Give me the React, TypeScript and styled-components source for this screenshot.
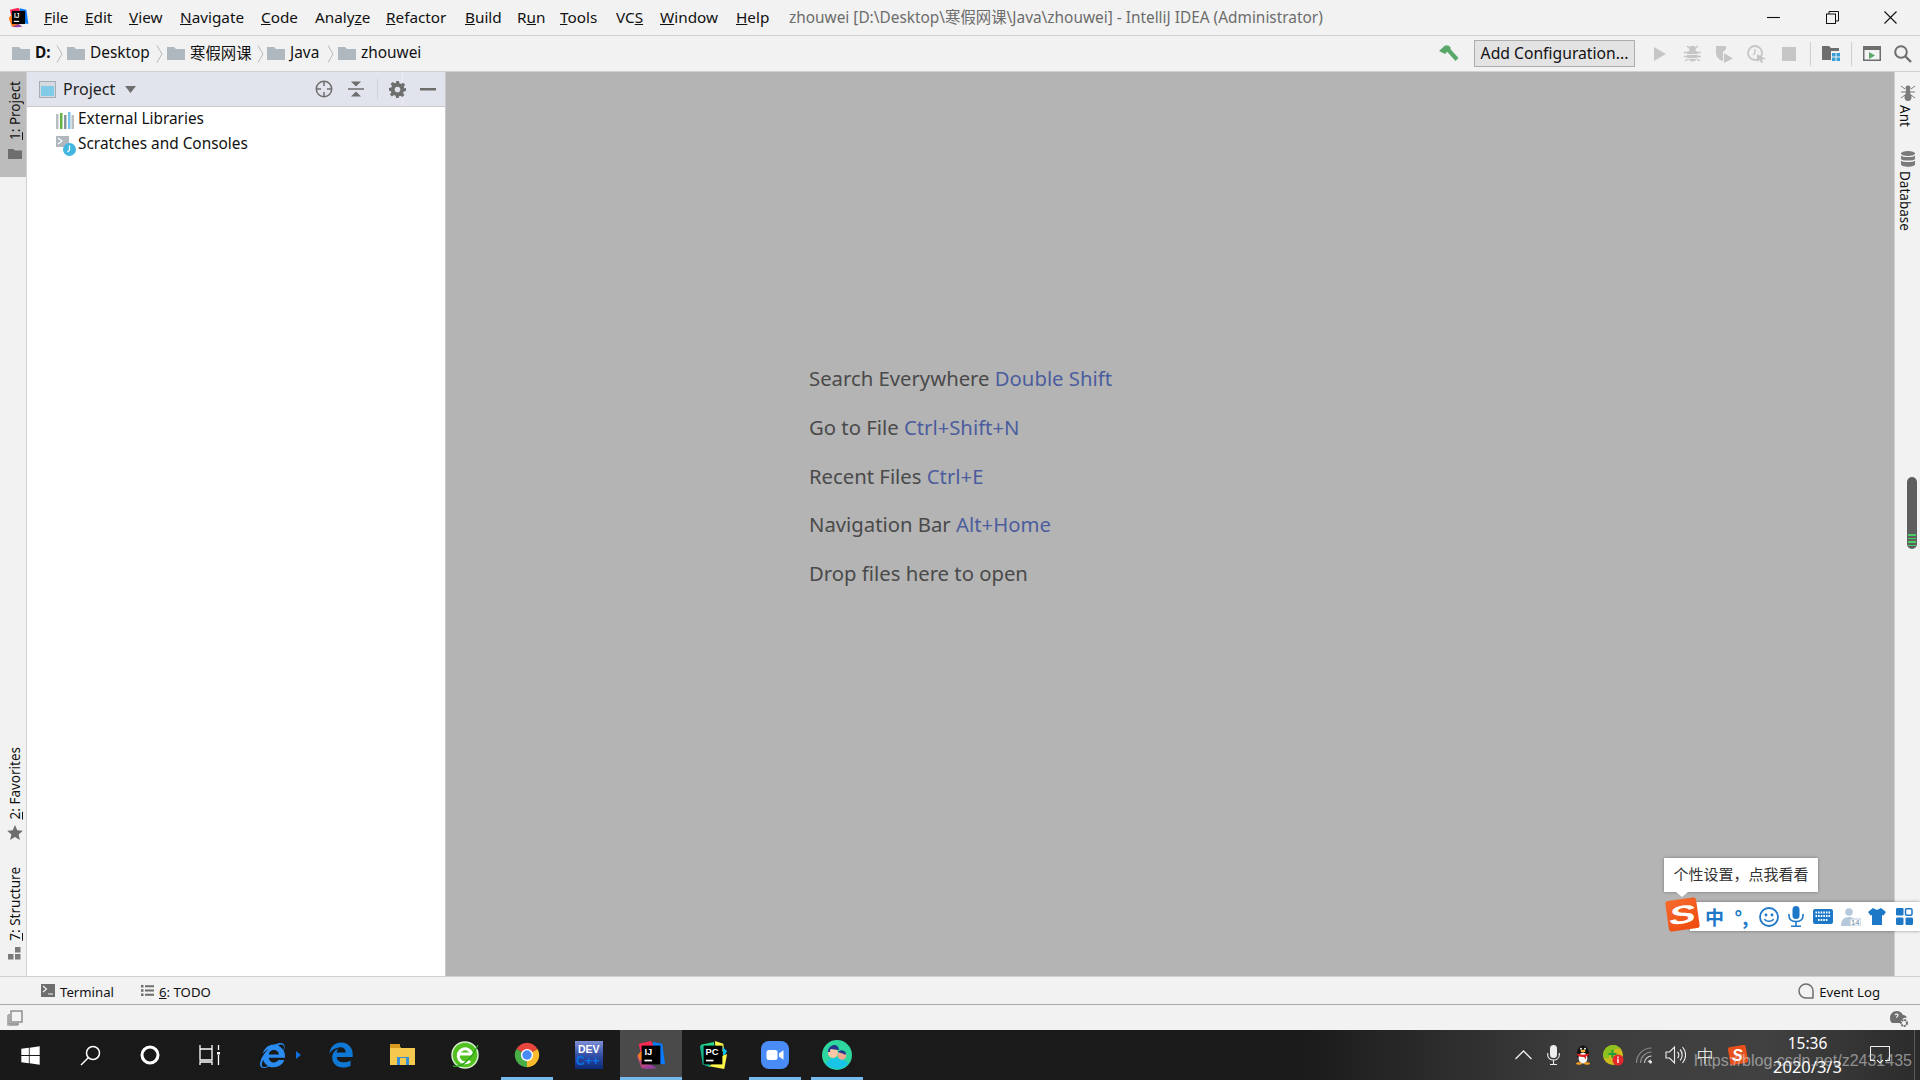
import React from "react";
import styled, { createGlobalStyle } from "styled-components";
import { FaWindows, FaInternetExplorer, FaEdgeLegacy } from "react-icons/fa";

const FONT = `"Noto Sans", "Noto Sans CJK SC", sans-serif`;

const Global = createGlobalStyle`
  html, body { margin: 0; padding: 0; width: 1920px; height: 1080px; overflow: hidden; }
  body { font-family: ${FONT}; color: #111; background: #f2f2f2; }
  svg { display: block; flex: none; }
`;

const Page = styled.div`
  position: relative; width: 1920px; height: 1080px; display: flex; flex-direction: column; overflow: hidden;
`;
const TitleBar = styled.header`
  height: 35px; display: flex; align-items: center; background: #f2f2f2;
  border-bottom: 1px solid #d0d0d0; padding-left: 8px;
`;
const LogoSlot = styled.div`width: 36px; display: flex;`;
const MenuItem = styled.span<{ $w: number }>`
  width: ${p => p.$w}px; flex: none; font-size: 15.3px; color: #111; white-space: nowrap; margin-bottom: 2px;
`;
const WindowTitle = styled.span`
  font-size: 15.4px; color: #6c6c6c; white-space: nowrap; flex: 1; margin-bottom: 2px;
`;
const WinButton = styled.div`width: 58.5px; height: 35px; display: flex; align-items: center; justify-content: center;`;
const WinButtons = styled.div`display: flex;`;

const NavBar = styled.nav`
  height: 35px; display: flex; align-items: center; background: #f2f2f2; border-bottom: 1px solid #d0d0d0; padding-left: 12px;
`;
const Crumb = styled.div<{ $w: number }>`
  width: ${p => p.$w}px; flex: none; display: flex; align-items: center; gap: 5px; padding-right: 4px; box-sizing: border-box;
`;
const CrumbText = styled.span<{ $bold?: boolean }>`
  font-size: 15.4px; font-weight: ${p => (p.$bold ? 700 : 400)}; color: #111; white-space: nowrap; margin-bottom: 2px; flex: 1;
`;
const NavTools = styled.div`margin-left: auto; display: flex; align-items: center; padding-right: 1px;`;
const Tool = styled.div<{ $w: number }>`
  width: ${p => p.$w}px; height: 30px; display: flex; align-items: center; justify-content: center; flex: none;
`;
const ConfigButton = styled.button`
  width: 161px; height: 27px; margin: 0 9px 0 12px; padding: 0 0 2px; background: #e3e3e3; border: 1px solid #adadad; outline: 0;
  font-family: ${FONT}; font-size: 15.7px; color: #111;
`;
const ToolSep = styled.div`width: 1px; height: 24px; background: #cfcfcf; flex: none; margin: 0 5px;`;

const Main = styled.main`flex: 1; min-height: 0; display: flex;`;
const LeftStripe = styled.aside`
  width: 26px; flex: none; display: flex; flex-direction: column; background: #f2f2f2; border-right: 1px solid #cfcfcf;
`;
const StripeButton = styled.div<{ $active?: boolean }>`
  display: flex; flex-direction: column; align-items: center; gap: 6px; padding-left: 3px;
  background: ${p => (p.$active ? "#bcbcbc" : "transparent")};
`;
const ProjectStripe = styled(StripeButton)`height: 105px; padding-top: 9px; box-sizing: border-box; gap: 8px;`;
const StripeBottom = styled.div`margin-top: auto; display: flex; flex-direction: column; gap: 27px; padding-bottom: 16px;`;
const UpLabel = styled.span`
  writing-mode: vertical-rl; transform: rotate(180deg); font-size: 13.5px; line-height: 18px; color: #111; white-space: nowrap;
`;
const DownLabel = styled.span`
  writing-mode: vertical-rl; font-size: 13.5px; line-height: 18px; color: #111; white-space: nowrap; margin-right: 5px;
`;
const ProjectPanel = styled.section`
  width: 418px; flex: none; background: #fff; border-right: 1px solid #c9c9c9; display: flex; flex-direction: column;
`;
const PanelHeader = styled.div`
  position: relative; height: 34px; flex: none; display: flex; align-items: center; background: #e1e4ec; border-bottom: 1px solid #c9c9c9; padding-left: 12px;
  &::after { content: ""; position: absolute; left: 375px; top: 0; bottom: 0; width: 1px; background: #edeff4; }
`;
const PanelTitle = styled.span`font-size: 16px; color: #222; margin: 0 0 0 7px; width: 62px;`;
const PanelTools = styled.div`margin-left: auto; display: flex; align-items: center; position: relative; z-index: 1;`;
const PanelTool = styled.div<{ $w: number }>`
  width: ${p => p.$w}px; height: 24px; display: flex; align-items: center; justify-content: center;
`;
const PanelSep = styled.div`width: 1px; height: 20px; background: #cdd0d8; margin: 0 5px;`;
const Tree = styled.div`padding-top: 1px; display: flex; flex-direction: column;`;
const TreeRow = styled.div`
  height: 25px; display: grid; grid-template-columns: 18px auto; justify-content: start; align-items: center; column-gap: 4px; padding-left: 29px;
`;
const TreeLabel = styled.span`font-size: 15.4px; color: #111; margin-bottom: 5px;`;
const Editor = styled.section`
  flex: 1; min-width: 0; background: #b4b4b4; padding: 282px 0 0 363px; box-sizing: border-box;
`;
const Hint = styled.div`font-size: 20.3px; line-height: 49px; height: 48.8px; color: #4a4a4a; white-space: nowrap;`;
const Shortcut = styled.span`color: #4c5d9e;`;
const RightStripe = styled.aside`
  width: 25px; flex: none; display: flex; flex-direction: column; align-items: center; background: #f2f2f2;
  border-left: 1px solid #cfcfcf; padding-top: 13px; gap: 4px;
`;
const RightGroup = styled.div<{ $gap: number }>`
  display: flex; flex-direction: column; align-items: center; gap: 4px; margin-bottom: ${p => p.$gap}px;
`;

const ToolBar = styled.div`
  height: 24px; padding-top: 3px; flex: none; display: flex; align-items: center; background: #f2f2f2; border-top: 1px solid #d0d0d0;
  padding-left: 41px; font-size: 13.2px; color: #111;
`;
const ToolTab = styled.div<{ $w?: number }>`
  display: flex; align-items: center; gap: 5px; width: ${p => (p.$w ? p.$w + "px" : "auto")};
`;
const ToolRight = styled(ToolTab)`margin-left: auto; padding-right: 40px;`;
const TabIcon = styled.span`margin-top: -3px;`;
const StatusBar = styled.div`
  height: 25px; flex: none; display: flex; align-items: center; justify-content: space-between; background: #f2f2f2;
  border-top: 1px solid #a8a8a8; padding: 0 11px 0 7px;
`;
const Taskbar = styled.footer`
  position: relative; height: 50px; flex: none; display: flex; align-items: center;
  background: linear-gradient(90deg, #191919 0, #1b1b1b 68%, #3d3d3d 82%, #414141 92%, #2b2b2b 100%);
`;
const TaskSlot = styled.div<{ $w: number; $active?: boolean; $open?: boolean }>`
  position: relative; width: ${p => p.$w}px; height: 50px; flex: none; display: flex; align-items: center; justify-content: center;
  background: ${p => (p.$active ? "#4a4a4a" : "transparent")};
  &::after {
    content: ""; position: absolute; bottom: 0; height: 3px; background: #76b9ed;
    left: ${p => (p.$active ? "0" : "5px")}; right: ${p => (p.$active ? "0" : "5px")};
    display: ${p => (p.$open ? "block" : "none")};
  }
`;
const IESlot = styled(TaskSlot)`gap: 11px; padding-left: 20px; box-sizing: border-box; justify-content: flex-start;`;
const Caret = styled.span`
  width: 0; height: 0; border-left: 5px solid #0f6fe0; border-top: 4px solid transparent; border-bottom: 4px solid transparent;
`;
const Tray = styled.div`margin-left: auto; display: flex; align-items: center; height: 50px;`;
const TrayItem = styled.div<{ $w: number }>`
  width: ${p => p.$w}px; flex: none; display: flex; align-items: center; justify-content: center;
`;
const TrayIme = styled.span`font-family: "Noto Sans CJK SC", sans-serif; font-weight: 200; color: #fff; font-size: 17px; line-height: 1; margin-bottom: 2px;`;
const Clock = styled.div`
  width: 105px; height: 50px; flex: none; display: flex; flex-direction: column; align-items: center; color: #fff; padding-top: 3px; box-sizing: border-box;
`;
const ClockLine = styled.span`font-size: 15.5px; line-height: 21px; white-space: nowrap;`;
const ClockDate = styled(ClockLine)`font-size: 16.5px; line-height: 25px;`;
const DesktopEdge = styled.div`width: 1px; height: 50px; background: #5a5a5a; margin: 0 5px 0 14px;`;
const Watermark = styled.span`
  position: absolute; left: 1694px; top: 20px; font-family: "Liberation Sans", sans-serif; font-size: 16px; line-height: 22px;
  color: rgba(225, 225, 225, 0.55); white-space: nowrap;
`;
const ScrollPill = styled.div`
  position: absolute; left: 1907px; top: 477px; width: 10px; height: 72px; border-radius: 5px; background: #5e5e5e;
  display: flex; flex-direction: column; justify-content: flex-end; align-items: center; gap: 2px; padding-bottom: 3px; box-sizing: border-box;
  box-shadow: 0 0 2px rgba(255,255,255,.8);
`;
const ScrollTick = styled.i`display: block; width: 8px; height: 1.5px; background: #4bd162;`;
const ImeTip = styled.div`
  position: absolute; left: 1664px; top: 858px; width: 154px; height: 34px; padding-bottom: 3px; box-sizing: border-box; background: #fff; display: flex; align-items: center; justify-content: center;
  font-family: "Noto Sans CJK SC", sans-serif; font-size: 15px; color: #333; box-shadow: 0 0 3px rgba(0,0,0,.35);
  white-space: nowrap;
  &::after {
    content: ""; position: absolute; left: 12px; bottom: -5px; border-top: 5px solid #fff; border-left: 6px solid transparent; border-right: 6px solid transparent;
  }
`;
const ImeBar = styled.div`
  position: absolute; left: 1690px; top: 902px; width: 230px; height: 29px; background: #fff; display: flex; align-items: center; padding-left: 11px; box-sizing: border-box;
  box-shadow: 0 0 3px rgba(0,0,0,.4);
`;
const ImeSlot = styled.div<{ $w: number }>`
  width: ${p => p.$w}px; flex: none; display: flex; align-items: center; justify-content: center; color: #1e78c8;
`;
const ImeGlyph = styled.span`font-family: "Noto Sans CJK SC", sans-serif; font-weight: 700; font-size: 19px; line-height: 1; color: #1e78c8;`;
const ImeLogo = styled.div`
  position: absolute; left: 1667px; top: 899px; width: 31px; height: 31px; border-radius: 3px; transform: rotate(-8deg);
  background: linear-gradient(160deg, #f76a2c, #ee4a10); display: flex; align-items: center; justify-content: center;
  font-family: "Liberation Sans", sans-serif; font-weight: 700; font-style: italic; font-size: 30px; line-height: 1; color: #fff;
`;
const ImeLetter = styled.span`display: block; transform: scale(1.35, 0.85);`;

const Svg: React.FC<{ w: number; h: number; vb?: string; children: React.ReactNode }> = ({ w, h, vb, children }) => (
  <svg width={w} height={h} viewBox={vb || `0 0 ${w} ${h}`}>{children}</svg>
);

const Folder = ({ c = "#afb8bf", w = 18, h = 13 }: { c?: string; w?: number; h?: number }) => (
  <Svg w={w} h={h} vb="0 0 18 13"><path d="M0 0h7l2 2h9v11H0z" fill={c} /></Svg>
);
const Chevron = () => (
  <Svg w={7} h={18}><path d="M1 0.5l5 8.500-5 8.500" fill="none" stroke="#b8b8b8" strokeWidth="1" /></Svg>
);
const IJLogo = ({ s = 22, dark = false }: { s?: number; dark?: boolean }) => (
  <Svg w={s} h={s} vb="0 0 32 32">
    <path d="M3 4l13-3 4 7-14 12z" fill="#fe2857" />
    <path d="M1 17l7-8 8 20-10 1z" fill={dark ? "#b5497f" : "#fc801d"} />
    <path d="M2 16l5-6 3 8-6 4z" fill="#fc801d" />
    <path d="M18 2l10 2 3 22-12-2z" fill="#087cfa" />
    <path d="M6 30l10-4 6 4-10 1z" fill="#9b3fa1" />
    <rect x="6" y="6" width="20" height="20" fill="#000" />
    <text x="9" y="16" fontFamily="Liberation Sans" fontSize="10" fontWeight="700" fill="#fff">IJ</text>
    <rect x="9" y="21" width="8" height="1.8" fill="#fff" />
  </Svg>
);
const PCLogo = () => (
  <Svg w={30} h={32} vb="0 0 32 32">
    <path d="M3 5l14-3 1 8-13 12z" fill="#21d789" />
    <path d="M2 6l3 20 8 3-3-22z" fill="#14b58e" />
    <path d="M18 1l9 3 1 8-9 1z" fill="#fcf84a" />
    <path d="M26 7l5 5-4 6z" fill="#07c3f2" />
    <path d="M12 28l16 3 3-16-10 4z" fill="#fcf84a" />
    <rect x="6" y="6" width="20" height="20" fill="#000" />
    <text x="8" y="16" fontFamily="Liberation Sans" fontSize="10" fontWeight="700" fill="#fff">PC</text>
    <rect x="8.500" y="21" width="8" height="1.8" fill="#fff" />
  </Svg>
);
const Chrome = () => (
  <Svg w={28} h={28} vb="0 0 32 32">
    <path d="M3.900 9A14 14 0 0 1 28.100 9L16 16z" fill="#e8453c" />
    <path d="M28.100 9A14 14 0 0 1 16 30L16 16z" fill="#f9bb2d" />
    <path d="M16 30A14 14 0 0 1 3.900 9L16 16z" fill="#4aae48" />
    <circle cx="16" cy="16" r="7" fill="#fff" />
    <circle cx="16" cy="16" r="5.400" fill="#4a8af4" />
  </Svg>
);
const DevCpp = () => (
  <Svg w={28} h={28}>
    <defs><linearGradient id="dv" x1="0" y1="0" x2="0" y2="1"><stop offset="0" stopColor="#7f8fd6" /><stop offset=".5" stopColor="#3550a8" /><stop offset="1" stopColor="#0b2a78" /></linearGradient></defs>
    <rect width="28" height="28" fill="url(#dv)" />
    <text x="3" y="12" fontFamily="Liberation Sans" fontSize="10.500" fontWeight="700" fill="#fff">DEV</text>
    <text x="1" y="24" fontFamily="Liberation Sans" fontSize="12.500" fontWeight="700" fill="#0a72e6">C++</text>
  </Svg>
);
const GreenE = () => (
  <Svg w={30} h={30}>
    <circle cx="15" cy="15" r="13" fill="#52c11f" stroke="#d7eed0" strokeWidth="1.500" />
    <path d="M7 14h15M22 14a7 7 0 1 0-2 7" fill="none" stroke="#fff" strokeWidth="3" />
    <path d="M3 26c8 2 18-6 25-21" fill="none" stroke="#2aa01f" strokeWidth="1.300" />
  </Svg>
);
const ExplorerIcon = () => (
  <Svg w={28} h={24}>
    <path d="M1 5c0-2 1-3 2-3h7l2 3h14v17H1z" fill="#f4c94e" />
    <rect x="1" y="1" width="10" height="4" fill="#d79b1d" />
    <path d="M8 22v-8h12v8h-3v-4h-6v4z" fill="#3a8fd9" />
    <rect x="11" y="15" width="6" height="4" fill="#f4c94e" />
  </Svg>
);
const ZoomLogo = () => (
  <Svg w={28} h={28}>
    <rect width="28" height="28" rx="8" fill="#4a8cf6" />
    <rect x="5.500" y="9" width="11" height="10" rx="2.500" fill="#fff" />
    <path d="M18 12.500l4.500-3.200v9.400L18 15.500z" fill="#fff" />
  </Svg>
);
const FaceLogo = () => (
  <Svg w={30} h={30}>
    <circle cx="15" cy="15" r="15" fill="#2ed6a0" />
    <path d="M4 24c2-5 6-6 10-6s10 1 12 6a15 15 0 0 1-22 0z" fill="#18c5e6" />
    <circle cx="11" cy="13" r="5" fill="#f9c6a8" />
    <circle cx="20" cy="15.500" r="4.200" fill="#f4a990" />
    <path d="M6 12c0-5 4-7 6.500-7s4.500 2 4.500 5c-4 0-6-1-8-1-1 0-1 2-1 3z" fill="#25368a" />
    <path d="M16 12c1-2 6-3 8 1l-1 2c-2-2-5-2-7-3z" fill="#25368a" />
  </Svg>
);
const WinIcon = () => <FaWindows size={21} color="#fff" />;
const SearchGlyph = ({ c = "#fff", s = 21 }: { c?: string; s?: number }) => (
  <Svg w={s} h={s} vb="0 0 21 21">
    <circle cx="13" cy="8" r="6.500" fill="none" stroke={c} strokeWidth="1.500" />
    <path d="M8.500 12.500L1 20" stroke={c} strokeWidth="1.500" />
  </Svg>
);
const Cortana = () => <Svg w={20} h={20}><circle cx="10" cy="10" r="8" fill="none" stroke="#fff" strokeWidth="3" /></Svg>;
const TaskView = () => (
  <Svg w={22} h={20}>
    <path d="M1 0v4h12V0M1 4v11h12V4M1 20v-3h12v3" fill="none" stroke="#fff" strokeWidth="1.300" />
    <path d="M19.500 0v5M19.500 10v10" stroke="#fff" strokeWidth="1.300" />
    <rect x="18" y="7" width="3" height="2.500" fill="#fff" />
  </Svg>
);

const Hammer = () => (
  <Svg w={20} h={18}>
    <path d="M0 6L6 .5h3.500L12 3 6 9z" fill="#59a869" />
    <path d="M7 5.500l3-3 9.500 10.500-3 3z" fill="#59a869" />
  </Svg>
);
const Play = ({ c = "#c6c6c6" }: { c?: string }) => <Svg w={14} h={16}><path d="M1 1l12 7-12 7z" fill={c} /></Svg>;
const Bug = () => (
  <Svg w={17} h={17}>
    <ellipse cx="8.500" cy="10.500" rx="5.500" ry="6" fill="#c6c6c6" />
    <ellipse cx="8.500" cy="3.500" rx="3.500" ry="2.800" fill="#c6c6c6" />
    <path d="M0 7.500h17M0 11.500h17M1 16l3-2M16 16l-3-2M3 1l2.500 2M14 1l-2.500 2" stroke="#c6c6c6" strokeWidth="1.400" />
    <path d="M3 9.500h11M3 13.500h11" stroke="#f2f2f2" strokeWidth="0.900" />
  </Svg>
);
const Coverage = () => (
  <Svg w={19} h={18}>
    <path d="M1 1h10v3L8 7v9l-3-1c-3-2-4-5-4-8z" fill="#c6c6c6" />
    <path d="M9 8l9 5.500-9 4.500z" fill="#c6c6c6" />
  </Svg>
);
const Profiler = () => (
  <Svg w={20} h={18}>
    <circle cx="8" cy="8" r="7" fill="none" stroke="#c6c6c6" strokeWidth="1.800" />
    <path d="M8 4v4l-2 2" fill="none" stroke="#c6c6c6" strokeWidth="1.400" />
    <path d="M10 9l9 5-4 .5 1 3-2 .5-1.500-3-2.500 2z" fill="#c6c6c6" />
  </Svg>
);
const Stop = () => <Svg w={14} h={14}><rect width="14" height="14" fill="#c6c6c6" /></Svg>;
const ProjectStructure = () => (
  <Svg w={19} h={17}>
    <path d="M0 1h7l2 2h8v3H9v9H0z" fill="#6e6e6e" />
    <path d="M10 8h3.500v3.500H10zM14.500 8H18v3.500h-3.500zM10 12.500h3.500V16H10zM14.500 12.500H18V16h-3.500z" fill="#389fd6" />
  </Svg>
);
const RunPanel = () => (
  <Svg w={18} h={15}>
    <rect x=".75" y=".75" width="16.500" height="13.500" fill="none" stroke="#6e6e6e" strokeWidth="1.500" />
    <rect x="1" y="1" width="16" height="3" fill="#6e6e6e" />
    <path d="M6 6l6 3.500-6 3.500z" fill="#59a869" />
  </Svg>
);
const SearchDark = () => (
  <Svg w={18} h={18}>
    <circle cx="7" cy="7" r="5.800" fill="none" stroke="#6e6e6e" strokeWidth="2" />
    <path d="M11 11l6 6" stroke="#6e6e6e" strokeWidth="2.400" />
  </Svg>
);
const Minimize = () => <Svg w={13} h={13}><path d="M0 6.500h13" stroke="#111" strokeWidth="1.100" /></Svg>;
const Restore = () => (
  <Svg w={13} h={13}>
    <rect x=".5" y="3" width="9" height="9.500" fill="none" stroke="#111" />
    <path d="M3 3V.5h9.500V10H9.500" fill="none" stroke="#111" />
  </Svg>
);
const CloseX = () => <Svg w={13} h={13}><path d="M.5.500l12 12M12.500.500l-12 12" stroke="#111" strokeWidth="1.100" /></Svg>;

const ProjectIcon = () => (
  <Svg w={17} h={17}>
    <rect width="17" height="17" fill="#a4adb4" />
    <rect x="1" y="1" width="15" height="15" fill="#d5dae0" />
    <rect x="2" y="5" width="13" height="10" fill="#7fcbe8" />
  </Svg>
);
const Caret2 = () => <Svg w={11} h={7}><path d="M0 0h11L5.500 7z" fill="#6e6e6e" /></Svg>;
const Locate = () => (
  <Svg w={18} h={18}>
    <circle cx="9" cy="9" r="7.700" fill="none" stroke="#6e6e6e" strokeWidth="1.500" />
    <path d="M9 1v5M9 12v5M1 9h5M12 9h5" stroke="#6e6e6e" strokeWidth="1.500" />
  </Svg>
);
const Collapse = () => (
  <Svg w={16} h={16}>
    <path d="M0 8h16" stroke="#6e6e6e" strokeWidth="1.500" />
    <path d="M3 .5h10L8 5.500zM3 15.500h10L8 10.500z" fill="#6e6e6e" />
  </Svg>
);
const Gear = () => (
  <Svg w={17} h={17} vb="0 0 24 24">
    <path d="M10 0h4l.7 3.300 2.300 1 2.900-1.900 2.800 2.800-1.900 2.900 1 2.300L24 10v4l-3.200.7-1 2.300 1.900 2.900-2.800 2.800-2.900-1.900-2.300 1L14 24h-4l-.7-3.100-2.300-1-2.900 1.900-2.800-2.800 1.900-2.900-1-2.300L0 14v-4l3.200-.7 1-2.300-1.900-2.900 2.800-2.800 2.900 1.900 2.300-1z M12 8a4 4 0 1 0 0 8 4 4 0 0 0 0-8z" fill="#6e6e6e" fillRule="evenodd" />
  </Svg>
);
const Minus = () => <Svg w={16} h={3}><rect width="16" height="2.500" fill="#6e6e6e" /></Svg>;
const Libraries = () => (
  <Svg w={18} h={18}>
    <rect x="0" y="2" width="2.500" height="15" fill="#b8bec4" />
    <rect x="4" y="1" width="2.500" height="16" fill="#62b543" />
    <rect x="8" y="3" width="2.500" height="14" fill="#8a949c" />
    <rect x="12" y="0" width="2.500" height="17" fill="#40a8e0" opacity=".7" />
    <rect x="15.500" y="3" width="2.500" height="14" fill="#b8bec4" />
  </Svg>
);
const Scratches = () => (
  <Svg w={20} h={20}>
    <rect x="0" y="0" width="13" height="11" fill="#b0b8be" />
    <path d="M2 2l4 3-4 3" fill="none" stroke="#fff" strokeWidth="1.200" />
    <circle cx="13.500" cy="13.500" r="6.500" fill="#40b6e0" />
    <path d="M13.500 9.500v4.500l-2 2" fill="none" stroke="#fff" strokeWidth="1.200" />
  </Svg>
);
const Star = () => (
  <Svg w={16} h={15} vb="0 0 24 23"><path d="M12 0l3.500 8 8.500.8-6.400 5.700L19.500 23 12 18.500 4.500 23l1.900-8.500L0 8.800 8.500 8z" fill="#6e6e6e" /></Svg>
);
const Structure = () => (
  <Svg w={13} h={13}><path d="M7 0h5.500v5.500H7zM0 7h5.500v5.500H0zM7 7h5.500v5.500H7z" fill="#7b7b7b" /></Svg>
);
const AntIcon = () => (
  <Svg w={14} h={16}>
    <circle cx="7" cy="3" r="2.500" fill="#7b7b7b" />
    <ellipse cx="7" cy="7" rx="2.500" ry="2.500" fill="#7b7b7b" />
    <ellipse cx="7" cy="12" rx="3.500" ry="4" fill="#7b7b7b" />
    <path d="M0 1l4 3M14 1l-4 3M0 7h14M0 13l4-3M14 13l-4-3" stroke="#7b7b7b" strokeWidth="1" />
  </Svg>
);
const Database = () => (
  <Svg w={14} h={16}>
    <ellipse cx="7" cy="2.500" rx="7" ry="2.500" fill="#7b7b7b" />
    <path d="M0 4.500c1 2 13 2 14 0V8c-1 2-13 2-14 0z" fill="#7b7b7b" />
    <path d="M0 9.500c1 2 13 2 14 0V13.500c-1 3-13 3-14 0z" fill="#7b7b7b" />
  </Svg>
);
const TerminalIcon = () => (
  <Svg w={14} h={13}>
    <rect width="14" height="13" fill="#6e6e6e" />
    <path d="M2 2l3.500 3L2 8M7 10h5" fill="none" stroke="#f2f2f2" strokeWidth="1.200" />
  </Svg>
);
const TodoIcon = () => (
  <Svg w={13} h={11}>
    <path d="M0 0h2.500v2.500H0zM0 4.250h2.500v2.500H0zM0 8.500h2.500V11H0zM4 .25h9v2H4zM4 4.500h9v2H4zM4 8.750h9v2H4z" fill="#6e6e6e" />
  </Svg>
);
const Bubble = () => (
  <Svg w={16} h={16}>
    <path d="M8 1a7 7 0 0 1 7 7v7H8A7 7 0 1 1 8 1z" fill="none" stroke="#6e6e6e" strokeWidth="1.500" strokeLinejoin="round" />
  </Svg>
);
const Layers = () => (
  <Svg w={16} h={16}>
    <rect x="4" y="1" width="11" height="11" fill="none" stroke="#808080" strokeWidth="1.300" />
    <path d="M2 4v10h10" fill="none" stroke="#808080" strokeWidth="1.300" />
    <path d="M.5 5v10.500H11" fill="none" stroke="#b0b0b0" strokeWidth="1" />
  </Svg>
);
const HelpGear = () => (
  <Svg w={20} h={18}>
    <path d="M1 9c0-4 3-7 6.500-7S13 4 14 6c2 0 3.500 1 4 3-3-1-7 2-6 5H4c-2 0-3-2-3-5z" fill="#6e6e6e" />
    <path d="M6 6c1-1.500 3-1 3 .300 0 1-1.500 1.200-1.500 2.500" fill="none" stroke="#f2f2f2" strokeWidth="1.200" />
    <circle cx="15" cy="14" r="3" fill="none" stroke="#6e6e6e" strokeWidth="2" strokeDasharray="2 .8" />
  </Svg>
);

const TrayChevron = () => <Svg w={17} h={10}><path d="M.5 9l8-8 8 8" fill="none" stroke="#eee" strokeWidth="1.300" /></Svg>;
const TrayMic = () => (
  <Svg w={13} h={20}>
    <rect x="3" y="0" width="7" height="13" rx="3.500" fill="#eee" />
    <path d="M.7 8v2c0 3 2.500 5 5.800 5s5.800-2 5.800-5V8M6.500 15v4M3 19.500h7" fill="none" stroke="#eee" strokeWidth="1.100" />
  </Svg>
);
const Penguin = () => (
  <Svg w={16} h={20}>
    <ellipse cx="8" cy="9" rx="6" ry="8.500" fill="#111" />
    <ellipse cx="8" cy="13" rx="4.500" ry="5.500" fill="#f6f6f6" />
    <ellipse cx="8" cy="6" rx="2.500" ry="1.300" fill="#f5b32a" />
    <circle cx="6" cy="3.800" r="1" fill="#eee" /><circle cx="10" cy="3.800" r="1" fill="#eee" />
    <path d="M2.500 8.500c3 1.500 8 1.500 11 0l.5 1.500-3 1.500v3l-2-2.500c-3 0-6-.5-7-2z" fill="#e02020" />
    <ellipse cx="4" cy="18.500" rx="3" ry="1.300" fill="#f5a020" /><ellipse cx="12" cy="18.500" rx="3" ry="1.300" fill="#f5a020" />
  </Svg>
);
const GreenBadge = () => (
  <Svg w={21} h={21}>
    <circle cx="10" cy="10" r="10" fill="#cdbb1f" />
    <path d="M0 10a10 10 0 0 1 10-10c4 0 6 2 8 4-6-2-10 2-12 8-2 4-6 0-6-2z" fill="#8cc21f" />
    <path d="M9.500 5v8M5.500 9h8" stroke="#1f9e3a" strokeWidth="2" />
    <circle cx="15" cy="15" r="5.500" fill="#e5262a" />
    <rect x="14.300" y="13.500" width="1.400" height="4.500" fill="#fff" /><rect x="14.300" y="11.500" width="1.400" height="1.300" fill="#fff" />
  </Svg>
);
const Wifi = () => (
  <Svg w={17} h={17}>
    <path d="M.5 16a15 15 0 0 1 15-15M4.500 16a11 11 0 0 1 11-11" fill="none" stroke="#8a8a8a" strokeWidth="1.200" />
    <path d="M8.500 16a7 7 0 0 1 7-7M12 15a3.500 3.500 0 0 1 3-2" fill="none" stroke="#cfcfcf" strokeWidth="1.200" />
    <circle cx="14.500" cy="15" r="1.500" fill="#eee" />
  </Svg>
);
const Speaker = () => (
  <Svg w={21} h={20}>
    <path d="M1 7h3.500L9.500 2v16l-5-5H1z" fill="none" stroke="#eee" strokeWidth="1.100" />
    <path d="M12.500 7a4 4 0 0 1 0 6M15 4.500a8 8 0 0 1 0 11M17.500 2a12 12 0 0 1 0 16" fill="none" stroke="#eee" strokeWidth="1.100" />
  </Svg>
);
const SogouTray = () => (
  <Svg w={20} h={20}>
    <rect x="1" y="1" width="18" height="18" rx="2" fill="#e8501c" transform="rotate(-10 10 10)" />
    <text x="4" y="16" fontFamily="Liberation Sans" fontSize="16" fontWeight="700" fontStyle="italic" fill="#fff">S</text>
  </Svg>
);
const Notify = () => (
  <Svg w={20} h={19}>
    <path d="M.5.500h19v14H15M.5.500v14H5" fill="none" stroke="#eee" strokeWidth="1.100" />
    <path d="M7 14l3 3 3-3" fill="none" stroke="#eee" strokeWidth="1.100" />
  </Svg>
);

const ImeSmile = () => (
  <Svg w={20} h={20}>
    <circle cx="10" cy="10" r="9" fill="none" stroke="#1e78c8" strokeWidth="1.800" />
    <circle cx="7" cy="8" r="1.400" fill="#1e78c8" /><circle cx="13" cy="8" r="1.400" fill="#1e78c8" />
    <path d="M5.500 12c1.500 3 7.500 3 9 0" fill="none" stroke="#1e78c8" strokeWidth="1.500" />
  </Svg>
);
const ImeMic = () => (
  <Svg w={16} h={21}>
    <rect x="4.500" y="0" width="7" height="13" rx="3.500" fill="#1e78c8" />
    <path d="M1 8v2c0 3.500 3 5.500 7 5.500s7-2 7-5.500V8M8 15.500V20M3 20.200h10" fill="none" stroke="#1e78c8" strokeWidth="1.600" />
  </Svg>
);
const ImeKeys = () => (
  <Svg w={20} h={15}>
    <rect width="20" height="15" rx="2" fill="#1e78c8" />
    <path d="M2.500 3.500h15M2.500 7h15M5 11h10" stroke="#fff" strokeWidth="1.800" strokeDasharray="1.600 1" />
  </Svg>
);
const ImePerson = () => (
  <Svg w={20} h={18}>
    <circle cx="8" cy="4" r="3.800" fill="#b5c8dc" />
    <path d="M0 18c0-6 3-9 8-9 3 0 4 1 5 2v7z" fill="#b5c8dc" />
    <rect x="9" y="11" width="11" height="7" fill="#fff" stroke="#b5c8dc" />
    <text x="10" y="17.300" fontFamily="Liberation Sans" fontSize="7.500" fontWeight="700" fill="#8fa7bf">14</text>
  </Svg>
);
const ImeShirt = () => (
  <Svg w={18} h={17}><path d="M5 0l4 2 4-2 5 4-2.500 3.500L14 7v10H4V7L2.500 7.500 0 4z" fill="#1e78c8" /></Svg>
);
const ImeGrid = () => (
  <Svg w={17} h={17}>
    <rect width="7.500" height="7.500" rx="1.200" fill="#1e78c8" />
    <rect x="9.500" y=".8" width="6.500" height="6.500" rx="1.200" fill="#fff" stroke="#1e78c8" strokeWidth="1.500" />
    <rect y="9.500" width="7.500" height="7.500" rx="1.200" fill="#1e78c8" />
    <rect x="9.500" y="9.500" width="7.500" height="7.500" rx="1.200" fill="#1e78c8" />
  </Svg>
);

const menus: { pre: string; u: string; post: string; w: number }[] = [
  { pre: "", u: "F", post: "ile", w: 41 },
  { pre: "", u: "E", post: "dit", w: 44 },
  { pre: "", u: "V", post: "iew", w: 51 },
  { pre: "", u: "N", post: "avigate", w: 81 },
  { pre: "", u: "C", post: "ode", w: 54 },
  { pre: "Analy", u: "z", post: "e", w: 71 },
  { pre: "", u: "R", post: "efactor", w: 79 },
  { pre: "", u: "B", post: "uild", w: 52 },
  { pre: "R", u: "u", post: "n", w: 43 },
  { pre: "", u: "T", post: "ools", w: 56 },
  { pre: "VC", u: "S", post: "", w: 44 },
  { pre: "", u: "W", post: "indow", w: 76 },
  { pre: "", u: "H", post: "elp", w: 53 },
];

const crumbs = [
  { t: "D:", w: 55, bold: true },
  { t: "Desktop", w: 100 },
  { t: "寒假网课", w: 100 },
  { t: "Java", w: 71 },
  { t: "zhouwei", w: 90 },
];

const hints = [
  { t: "Search Everywhere ", k: "Double Shift" },
  { t: "Go to File ", k: "Ctrl+Shift+N" },
  { t: "Recent Files ", k: "Ctrl+E" },
  { t: "Navigation Bar ", k: "Alt+Home" },
  { t: "Drop files here to open", k: "" },
];

export default function App() {
  return (
    <Page>
      <Global />
      <TitleBar>
        <LogoSlot><IJLogo s={21} /></LogoSlot>
        {menus.map(m => (
          <MenuItem key={m.pre + m.u + m.post} $w={m.w}>{m.pre}<u>{m.u}</u>{m.post}</MenuItem>
        ))}
        <WindowTitle>zhouwei [D:\Desktop\寒假网课\Java\zhouwei] - IntelliJ IDEA (Administrator)</WindowTitle>
        <WinButtons>
          <WinButton><Minimize /></WinButton>
          <WinButton><Restore /></WinButton>
          <WinButton><CloseX /></WinButton>
        </WinButtons>
      </TitleBar>
      <NavBar>
        {crumbs.map((c, i) => (
          <Crumb key={c.t} $w={c.w}>
            <Folder />
            <CrumbText $bold={c.bold}>{c.t}</CrumbText>
            {i < crumbs.length - 1 && <Chevron />}
          </Crumb>
        ))}
        <NavTools>
          <Tool $w={26}><Hammer /></Tool>
          <ConfigButton>Add Configuration...</ConfigButton>
          <Tool $w={32}><Play /></Tool>
          <Tool $w={32}><Bug /></Tool>
          <Tool $w={32}><Coverage /></Tool>
          <Tool $w={33}><Profiler /></Tool>
          <Tool $w={32}><Stop /></Tool>
          <ToolSep />
          <Tool $w={30}><ProjectStructure /></Tool>
          <ToolSep />
          <Tool $w={30}><RunPanel /></Tool>
          <Tool $w={32}><SearchDark /></Tool>
        </NavTools>
      </NavBar>
      <Main>
        <LeftStripe>
          <ProjectStripe $active>
            <UpLabel><u>1</u>: Project</UpLabel>
            <Folder c="#6e6e6e" w={14} h={12} />
          </ProjectStripe>
          <StripeBottom>
            <StripeButton>
              <UpLabel><u>2</u>: Favorites</UpLabel>
              <Star />
            </StripeButton>
            <StripeButton>
              <UpLabel><u>7</u>: Structure</UpLabel>
              <Structure />
            </StripeButton>
          </StripeBottom>
        </LeftStripe>
        <ProjectPanel>
          <PanelHeader>
            <ProjectIcon />
            <PanelTitle>Project</PanelTitle>
            <Caret2 />
            <PanelTools>
              <PanelTool $w={32}><Locate /></PanelTool>
              <PanelTool $w={32}><Collapse /></PanelTool>
              <PanelSep />
              <PanelTool $w={28}><Gear /></PanelTool>
              <PanelTool $w={34}><Minus /></PanelTool>
            </PanelTools>
          </PanelHeader>
          <Tree>
            <TreeRow><Libraries /><TreeLabel>External Libraries</TreeLabel></TreeRow>
            <TreeRow><Scratches /><TreeLabel>Scratches and Consoles</TreeLabel></TreeRow>
          </Tree>
        </ProjectPanel>
        <Editor>
          {hints.map(h => (
            <Hint key={h.t}>{h.t}{h.k && <Shortcut>{h.k}</Shortcut>}</Hint>
          ))}
        </Editor>
        <RightStripe>
          <RightGroup $gap={20}>
            <AntIcon />
            <DownLabel>Ant</DownLabel>
          </RightGroup>
          <RightGroup $gap={0}>
            <Database />
            <DownLabel>Database</DownLabel>
          </RightGroup>
        </RightStripe>
      </Main>
      <ToolBar>
        <ToolTab $w={100}><TabIcon><TerminalIcon /></TabIcon>Terminal</ToolTab>
        <ToolTab><TabIcon><TodoIcon /></TabIcon><span><u>6</u>: TODO</span></ToolTab>
        <ToolRight><TabIcon><Bubble /></TabIcon>Event Log</ToolRight>
      </ToolBar>
      <StatusBar>
        <Layers />
        <HelpGear />
      </StatusBar>
      <Taskbar>
        <TaskSlot $w={60}><WinIcon /></TaskSlot>
        <TaskSlot $w={60}><SearchGlyph /></TaskSlot>
        <TaskSlot $w={60}><Cortana /></TaskSlot>
        <TaskSlot $w={60}><TaskView /></TaskSlot>
        <IESlot $w={70}><FaInternetExplorer size={25} color="#2a8cf0" /><Caret /></IESlot>
        <TaskSlot $w={62}><FaEdgeLegacy size={26} color="#0f78d4" /></TaskSlot>
        <TaskSlot $w={62}><ExplorerIcon /></TaskSlot>
        <TaskSlot $w={62}><GreenE /></TaskSlot>
        <TaskSlot $w={62} $open><Chrome /></TaskSlot>
        <TaskSlot $w={62}><DevCpp /></TaskSlot>
        <TaskSlot $w={62} $open $active><IJLogo s={30} dark /></TaskSlot>
        <TaskSlot $w={62}><PCLogo /></TaskSlot>
        <TaskSlot $w={62} $open><ZoomLogo /></TaskSlot>
        <TaskSlot $w={62} $open><FaceLogo /></TaskSlot>
        <Tray>
          <TrayItem $w={30}><TrayChevron /></TrayItem>
          <TrayItem $w={30}><TrayMic /></TrayItem>
          <TrayItem $w={30}><Penguin /></TrayItem>
          <TrayItem $w={30}><GreenBadge /></TrayItem>
          <TrayItem $w={32}><Wifi /></TrayItem>
          <TrayItem $w={30}><Speaker /></TrayItem>
          <TrayItem $w={30}><TrayIme>中</TrayIme></TrayItem>
          <TrayItem $w={35}><SogouTray /></TrayItem>
          <Clock>
            <ClockLine>15:36</ClockLine>
            <ClockDate>2020/3/3</ClockDate>
          </Clock>
          <TrayItem $w={40}><Notify /></TrayItem>
          <DesktopEdge />
        </Tray>
        <Watermark>https://blog.csdn.net/z2431435</Watermark>
      </Taskbar>
      <ScrollPill>
        <ScrollTick /><ScrollTick /><ScrollTick /><ScrollTick />
      </ScrollPill>
      <ImeTip>个性设置，点我看看</ImeTip>
      <ImeBar>
        <ImeSlot $w={27}><ImeGlyph>中</ImeGlyph></ImeSlot>
        <ImeSlot $w={27}><ImeGlyph>°,</ImeGlyph></ImeSlot>
        <ImeSlot $w={27}><ImeSmile /></ImeSlot>
        <ImeSlot $w={27}><ImeMic /></ImeSlot>
        <ImeSlot $w={28}><ImeKeys /></ImeSlot>
        <ImeSlot $w={27}><ImePerson /></ImeSlot>
        <ImeSlot $w={26}><ImeShirt /></ImeSlot>
        <ImeSlot $w={28}><ImeGrid /></ImeSlot>
      </ImeBar>
      <ImeLogo><ImeLetter>S</ImeLetter></ImeLogo>
    </Page>
  );
}
